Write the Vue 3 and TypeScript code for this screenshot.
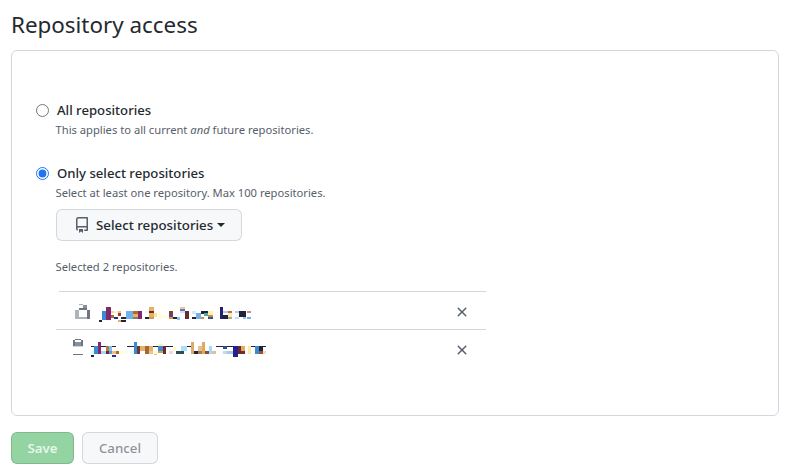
<script setup lang="ts">
type Cell = [number, number, number, number, string]

const D = '#22223a'
const B = '#3a8ad6'
const P = '#85276f'
const M = '#6a2a30'
const O = '#e8b070'
const L = '#70b0ee'
const G = '#6e7781'

const lockCells: Cell[] = [
  [87, 57, 12, 3, '#aab0b6'], [99, 60, 12, 9, '#8a9098'], [87, 69, 24, 6, G],
  [75, 75, 12, 27, '#aeb4ba'], [87, 96, 24, 6, '#aeb4ba'], [111, 75, 9, 27, G],
]
const personCells: Cell[] = [
  [75, 162, 18, 3, G], [69, 165, 6, 18, G], [75, 171, 18, 12, '#8a9098'], [93, 165, 6, 18, G],
  [69, 183, 30, 3, '#d0d4d8'], [69, 207, 30, 3, G],
]
const nameOne: Cell[] = [
  [147, 105, 9, 6, D], [156, 78, 12, 27, B], [168, 66, 15, 39, P], [183, 78, 9, 6, '#f7d9a8'],
  [192, 78, 12, 6, '#fff3c8'], [204, 78, 9, 6, '#f0c080'], [183, 90, 9, 9, '#b06a30'],
  [204, 84, 9, 9, '#a04020'], [192, 96, 12, 6, '#2a2a70'], [213, 96, 15, 6, D],
  [204, 105, 9, 5, '#e8b060'], [213, 105, 15, 5, D], [228, 78, 21, 24, L], [249, 78, 15, 9, '#b06a28'],
  [249, 87, 15, 9, O], [249, 96, 15, 6, '#808060'], [264, 78, 12, 24, P], [285, 96, 12, 6, D],
  [285, 78, 12, 6, '#e0fff8'], [297, 66, 15, 12, '#e8b060'], [297, 78, 15, 6, M], [297, 84, 15, 12, '#e8b060'],
  [297, 96, 15, 6, '#c0a050'], [312, 84, 9, 12, '#ffe0a0'], [321, 78, 12, 24, '#fffde0'],
  [333, 90, 24, 12, '#fffde8'], [357, 78, 12, 9, '#85402a'], [357, 87, 12, 9, '#6a3aa0'],
  [357, 96, 12, 6, '#d0a030'], [369, 96, 12, 6, D], [381, 96, 9, 9, '#8ac0f0'], [390, 66, 15, 6, '#f5c880'],
  [390, 72, 15, 6, '#6a70d0'], [390, 78, 15, 6, '#c0e8ff'], [405, 78, 12, 24, M], [426, 78, 12, 9, '#cfe8fa'],
  [426, 96, 12, 6, D], [438, 84, 15, 18, L], [453, 78, 9, 9, D], [462, 78, 12, 6, D], [462, 84, 12, 9, '#50a8a0'],
  [453, 96, 9, 6, '#d09030'], [474, 78, 15, 12, '#fff0b8'], [474, 90, 15, 6, '#d09030'], [474, 96, 15, 6, '#3050a0'],
  [510, 66, 9, 36, '#222270'], [519, 78, 15, 6, '#d0c0e0'], [534, 78, 12, 6, '#b07840'], [519, 90, 15, 12, D],
  [534, 84, 12, 12, '#ffe8b0'], [534, 96, 12, 6, '#a0b090'], [555, 78, 12, 6, '#b0d0f0'], [567, 78, 21, 12, D],
  [591, 78, 12, 6, '#c09090'], [555, 96, 12, 6, '#c0e0f8'], [567, 90, 21, 6, D], [579, 96, 9, 6, '#a0c0e0'],
  [591, 96, 12, 6, L],
]
const nameTwo: Cell[] = [
  [123, 183, 21, 3, D], [123, 198, 9, 9, '#d0fff8'], [123, 210, 9, 6, D], [132, 183, 12, 24, B], [144, 171, 9, 36, P],
  [153, 183, 15, 3, D], [153, 198, 15, 9, '#a0d8f8'], [168, 183, 9, 15, '#b08030'], [168, 198, 9, 9, '#7a2030'],
  [177, 183, 9, 15, '#80c0f0'], [177, 198, 9, 9, '#50a0e0'], [186, 198, 12, 9, '#f0c080'], [186, 210, 12, 6, '#2a2a80'],
  [186, 183, 12, 3, D], [198, 198, 9, 9, '#b06a28'], [207, 198, 24, 9, '#fffde0'], [231, 183, 21, 3, D], [240, 198, 12, 9, '#e0fff8'],
  [252, 171, 9, 36, B], [261, 183, 9, 24, '#6a3a30'], [270, 183, 15, 15, O], [285, 183, 12, 24, '#a06a30'],
  [297, 183, 12, 15, O], [297, 198, 12, 9, '#e8c890'], [309, 183, 15, 3, D], [309, 198, 15, 9, '#fff8e0'], [312, 207, 9, 3, '#f0c080'],
  [324, 177, 15, 6, '#fff0b0'], [324, 183, 15, 15, B],
  [324, 198, 15, 6, '#d0a040'], [339, 183, 9, 24, M], [348, 183, 21, 3, D], [357, 198, 12, 9, '#e8e0d8'],
  [369, 183, 9, 15, '#fff8d0'], [378, 198, 24, 9, '#2f4f4f'], [393, 183, 18, 15, '#a8e0ff'], [411, 183, 12, 3, D], [423, 171, 9, 36, '#e0a860'],
  [432, 198, 12, 9, D], [444, 183, 12, 15, '#e8c090'], [444, 198, 12, 9, '#a08050'], [456, 171, 9, 36, '#e0a860'],
  [465, 198, 12, 9, '#805030'], [477, 183, 9, 24, '#a8d8ff'], [486, 198, 12, 9, '#e0c090'], [498, 183, 21, 3, D], [519, 183, 12, 9, '#2a5090'],
  [519, 198, 12, 9, '#c8d8e8'], [531, 183, 18, 3, D], [531, 198, 18, 9, '#a8c8e8'], [549, 183, 15, 33, '#222290'], [564, 183, 9, 24, M],
  [573, 183, 12, 15, '#e8a860'], [573, 198, 12, 9, '#6a3020'], [594, 183, 9, 24, '#fde8a8'], [603, 183, 12, 3, D], [615, 183, 12, 24, B],
  [627, 183, 12, 15, D], [627, 198, 12, 9, '#a05030'], [639, 183, 9, 3, D], [639, 198, 9, 9, '#e8e0d8'],
]

const rows = [
  { icon: lockCells, iconBox: '75 57 45 45', iconClass: 'icon-one', name: nameOne, nameBox: '147 57 456 54', nameClass: 'name-one', rowClass: 'row-one' },
  { icon: personCells, iconBox: '69 162 30 48', iconClass: 'icon-two', name: nameTwo, nameBox: '123 171 525 45', nameClass: 'name-two', rowClass: 'row-two' },
]
</script>

<template>
  <main class="page">
    <h2 class="title">Repository access</h2>
    <section class="box">
      <label class="choice first">
        <input class="radio" type="radio" name="access" />
        <span class="label">All repositories</span>
      </label>
      <p class="note">This applies to all current <em>and</em> future repositories.</p>

      <label class="choice second">
        <input class="radio" type="radio" name="access" checked />
        <span class="label">Only select repositories</span>
      </label>
      <p class="note">Select at least one repository. Max 100 repositories.</p>

      <button class="btn select" type="button">
        <svg class="repo" viewBox="0 0 16 16" width="16" height="16" aria-hidden="true">
          <path d="M2 2.5A2.5 2.5 0 0 1 4.5 0h8.75a.75.75 0 0 1 .75.75v12.5a.75.75 0 0 1-.75.75h-2.5a.75.75 0 0 1 0-1.5h1.75v-2h-8a1 1 0 0 0-.714 1.7.75.75 0 1 1-1.072 1.05A2.495 2.495 0 0 1 2 11.5Zm10.5-1h-8a1 1 0 0 0-1 1v6.708A2.486 2.486 0 0 1 4.5 9h8ZM5 12.25a.25.25 0 0 1 .25-.25h3.5a.25.25 0 0 1 .25.25v3.25a.25.25 0 0 1-.4.2l-1.45-1.087a.249.249 0 0 0-.3 0L5.4 15.7a.25.25 0 0 1-.4-.2Z" />
        </svg>
        <span>Select repositories</span>
        <i class="caret"></i>
      </button>

      <p class="note selected">Selected 2 repositories.</p>

      <ul class="list">
        <li v-for="row in rows" :key="row.nameClass" class="row" :class="row.rowClass">
          <svg :class="row.iconClass" :viewBox="row.iconBox" shape-rendering="crispEdges" aria-hidden="true">
            <rect v-for="(c, i) in row.icon" :key="i" :x="c[0]" :y="c[1]" :width="c[2]" :height="c[3]" :fill="c[4]" />
          </svg>
          <svg :class="row.nameClass" :viewBox="row.nameBox" shape-rendering="crispEdges" aria-hidden="true">
            <rect v-for="(c, i) in row.name" :key="i" :x="c[0]" :y="c[1]" :width="c[2]" :height="c[3]" :fill="c[4]" />
          </svg>
          <svg class="remove" viewBox="0 0 16 16" width="16" height="16" aria-hidden="true">
            <path d="M3.72 3.72a.75.75 0 0 1 1.06 0L8 6.94l3.22-3.22a.749.749 0 0 1 1.275.326.749.749 0 0 1-.215.734L9.06 8l3.22 3.22a.749.749 0 0 1-.326 1.275.749.749 0 0 1-.734-.215L8 9.06l-3.22 3.22a.751.751 0 0 1-1.042-.018.751.751 0 0 1-.018-1.042L6.94 8 3.72 4.78a.75.75 0 0 1 0-1.06Z" />
          </svg>
        </li>
      </ul>
    </section>

    <div class="actions">
      <button class="btn save" type="button">Save</button>
      <button class="btn cancel" type="button">Cancel</button>
    </div>
  </main>
</template>

<style>
html, body { background: #fff; }
</style>

<style scoped>
.page {
  box-sizing: border-box;
  width: 809px;
  height: 476px;
  padding: 10px 30px 0 11px;
  font-family: "Noto Sans", "Open Sans", sans-serif;
  color: #24292f;
  overflow: hidden;
}
.title {
  margin: -1px 0 0;
  font-size: 22.4px;
  line-height: 32px;
  font-weight: 400;
}
.box {
  box-sizing: border-box;
  height: 366px;
  margin-top: 9px;
  border: 1px solid #d0d7de;
  border-radius: 6px;
  padding: 0 24px;
}
.choice {
  display: flex;
  align-items: center;
  height: 20px;
}
.first { margin-top: 49px; }
.second { margin-top: 24px; }
.radio {
  width: 13px;
  height: 13px;
  margin: 0 8px 0 0;
  accent-color: #1f75f0;
  flex: none;
}
.label {
  font-size: 13.15px;
  font-weight: 500;
}
.note {
  margin: 1px 0 0 19.5px;
  font-size: 11.2px;
  line-height: 18px;
  color: #57606a;
}
.btn {
  box-sizing: border-box;
  height: 32px;
  border: 1px solid rgba(27, 31, 36, 0.15);
  border-radius: 6px;
  font-family: inherit;
  font-size: 13.3px;
  font-weight: 500;
}
.select {
  display: flex;
  align-items: center;
  width: 186px;
  margin: 7px 0 0 20px;
  padding: 0 0 0 17px;
  background: #f6f8fa;
  color: #24292f;
}
.repo { fill: #57606a; margin-right: 6px; flex: none; }
.caret {
  width: 0;
  height: 0;
  margin-left: 4px;
  border-style: solid;
  border-width: 4px 4px 0;
  border-color: #24292f transparent transparent;
}
.selected { margin-top: 17px; }
.list {
  list-style: none;
  width: 430px;
  margin: 15px 0 0 20px;
  padding: 0;
}
.row {
  display: flex;
  align-items: flex-start;
  box-sizing: border-box;
  border-top: 1px solid #d0d7de;
}
.row-one { height: 38px; margin-left: 3px; padding: 12px 16px 0 16px; }
.row-two { height: 37px; padding: 12px 16px 0 15px; }
.icon-one { width: 15px; height: 15px; flex: none; }
.name-one { width: 152px; height: 18px; flex: none; margin-left: 9px; }
.icon-two { width: 10px; height: 16px; flex: none; margin-top: -3px; margin-left: 2px; }
.name-two { width: 175px; height: 15px; flex: none; margin-left: 8px; }
.remove { fill: #57606a; margin-left: auto; flex: none; }
.actions {
  display: flex;
  gap: 8px;
  margin-top: 16px;
}
.save {
  width: 63px;
  background: #94d3a2;
  color: rgba(255, 255, 255, 0.8);
  font-weight: 600;
}
.cancel {
  width: 76px;
  background: #f6f8fa;
  color: rgba(36, 41, 47, 0.5);
}
</style>
